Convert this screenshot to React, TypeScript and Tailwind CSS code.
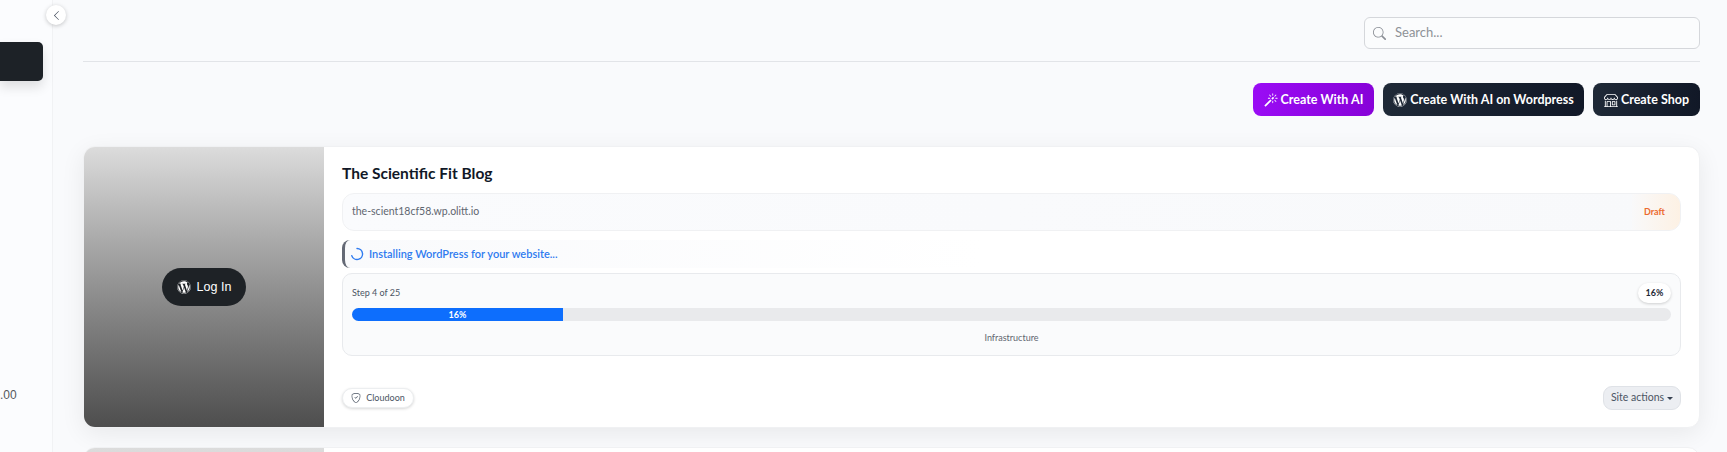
import { BsChevronLeft, BsSearch, BsShop, BsMagic, BsShieldCheck } from "react-icons/bs";
import { FaWordpress } from "react-icons/fa";

const font = "font-['Lato','Noto_Sans',sans-serif]";

export default function App() {
  return (
    <div className={`flex h-[452px] w-[1727px] overflow-hidden bg-[#f9fafc] ${font}`}>
      <aside className="relative flex h-full w-[53px] shrink-0 flex-col border-r border-[#f1f2f4] bg-[#fbfcfe]">
        <div className="mt-[42px] h-[39px] w-[43px] rounded-r-[5px] bg-[#1d2227] shadow-[0_6px_12px_rgba(0,0,0,0.12)]" />
        <div className="mt-[305px] font-['Liberation_Sans',sans-serif] text-[12px] leading-[18px] text-[#55585c]">.00</div>
        <button className="absolute left-[46px] top-[5px] flex h-5 w-5 items-center justify-center rounded-full bg-white shadow-[0_1px_4px_rgba(0,0,0,0.22)]">
          <BsChevronLeft size={11} className="text-[#374151]" />
        </button>
      </aside>

      <main className="flex min-w-0 flex-1 flex-col pl-[30px] pr-[27px]">
        <header className="flex h-[62px] shrink-0 justify-end border-b border-[#e2e4e8] pt-[17px]">
          <div className="flex h-[32px] w-[336px] items-center gap-[9px] rounded-[6px] border border-[#d5d7db] bg-[#fbfcfd] pl-[8px]">
            <BsSearch size={13} className="text-[#8b8f96]" />
            <span className="text-[13px] text-[#8e9297]">Search...</span>
          </div>
        </header>

        <div className="mt-[21px] flex shrink-0 justify-end gap-[9px]">
          <button className="flex h-[33px] w-[121px] items-center justify-center gap-[3px] rounded-[8px] bg-gradient-to-r from-[#9a0cf5] to-[#8702d8] pt-[1px] text-[12.5px] font-bold text-white">
            <BsMagic size={14} />
            Create With AI
          </button>
          <button className="flex h-[33px] w-[201px] items-center justify-center gap-[3px] rounded-[8px] bg-gradient-to-r from-[#1f2937] to-[#111827] pt-[1px] text-[12.5px] font-bold text-white">
            <FaWordpress size={14} />
            Create With AI on Wordpress
          </button>
          <button className="flex h-[33px] w-[107px] items-center justify-center gap-[3px] rounded-[8px] bg-gradient-to-r from-[#1f2937] to-[#111827] pt-[1px] text-[12.5px] font-bold text-white">
            <BsShop size={14} />
            Create Shop
          </button>
        </div>

        <section className="mt-[30px] flex h-[282px] shrink-0 overflow-hidden rounded-[12px] border border-[#f0f1f3] bg-white shadow-[0_6px_24px_rgba(0,0,0,0.07)]">
          <div className="flex w-[240px] shrink-0 items-center justify-center bg-gradient-to-b from-[#dcdcdc] to-[#4e4e4e]">
            <button className="flex h-[38px] w-[84px] items-center justify-center gap-[6px] rounded-full bg-[#1e2226] font-['Liberation_Sans',sans-serif] text-[12.5px] text-white">
              <FaWordpress size={14} />
              Log In
            </button>
          </div>

          <div className="flex min-w-0 flex-1 flex-col px-[18px]">
            <h2 className="mt-[15px] h-[22px] text-[15.5px] font-bold leading-[22px] text-[#111827]">The Scientific Fit Blog</h2>
            <div className="mt-[9px] flex h-[38px] shrink-0 items-stretch justify-between overflow-hidden rounded-[12px] border border-[#f0f1f3] bg-gradient-to-r from-[#fafbfd] to-[#f8f9fb]">
              <span className="self-center pl-[9px] text-[10.5px] text-[#5f6670]">the-scient18cf58.wp.olitt.io</span>
              <span className="flex w-[48px] items-center justify-center bg-gradient-to-r from-[#f9f9fa] to-[#fdf1e4] pr-[3px] text-[9px] font-bold text-[#ec6a2e]">Draft</span>
            </div>
            <div className="mt-[9px] flex h-[28px] w-[640px] shrink-0 items-center gap-[5px] rounded-l-[8px] border-l-[3px] border-[#646975] bg-gradient-to-r from-[#f9fafc] to-white pl-[5px]">
              <svg width="14" height="14" viewBox="0 0 14 14" fill="none">
                <path d="M7 1.5a5.5 5.5 0 1 1-5.2 7.2" stroke="#2f7bf0" strokeWidth="1.4" strokeLinecap="round" />
              </svg>
              <span className="text-[11px] font-semibold text-[#2f7bf0]">Installing WordPress for your website...</span>
            </div>
            <div className="mt-[5px] flex h-[83px] shrink-0 flex-col rounded-[10px] border border-[#e8eaed] bg-[#fafbfc] px-[9px]">
              <div className="mt-[9px] flex h-[20px] items-center justify-between">
                <span className="text-[9px] text-[#4b5563]">Step 4 of 25</span>
                <span className="flex h-[20px] w-[33px] items-center justify-center rounded-full bg-white text-[9px] font-bold text-[#1f2937] shadow-[0_1px_3px_rgba(0,0,0,0.18)]">16%</span>
              </div>
              <div className="mt-[5px] h-[13px] overflow-hidden rounded-full bg-[#e9eaec]">
                <div className="flex h-full w-[211px] items-center justify-center bg-[#0d6efd] text-[9px] font-bold text-white">16%</div>
              </div>
              <div className="mt-[10px] text-center text-[9px] text-[#5f6670]">Infrastructure</div>
            </div>
            <div className="mt-[30px] flex items-center justify-between">
              <span className="flex h-[20px] w-[72px] items-center justify-center gap-[5px] rounded-full border border-[#eceef0] bg-white text-[9px] text-[#4b5563] shadow-[0_1px_3px_rgba(0,0,0,0.16)]">
                <BsShieldCheck size={10} />
                Cloudoon
              </span>
              <button className="flex h-[24px] w-[78px] items-center justify-center gap-[3px] rounded-[9px] border border-[#dfe2e7] bg-[#eceef2] text-[10.5px] text-[#4b5563]">
                Site actions
                <span className="mt-[1px] h-0 w-0 border-x-[3px] border-t-[3px] border-x-transparent border-t-[#374151]" />
              </button>
            </div>
          </div>
        </section>

        <section className="mt-[19px] flex h-[100px] shrink-0 overflow-hidden rounded-[12px] border border-[#f0f1f3] bg-white">
          <div className="w-[240px] shrink-0 bg-gradient-to-b from-[#dcdcdc] to-[#bbbbbb]" />
        </section>
      </main>
    </div>
  );
}
